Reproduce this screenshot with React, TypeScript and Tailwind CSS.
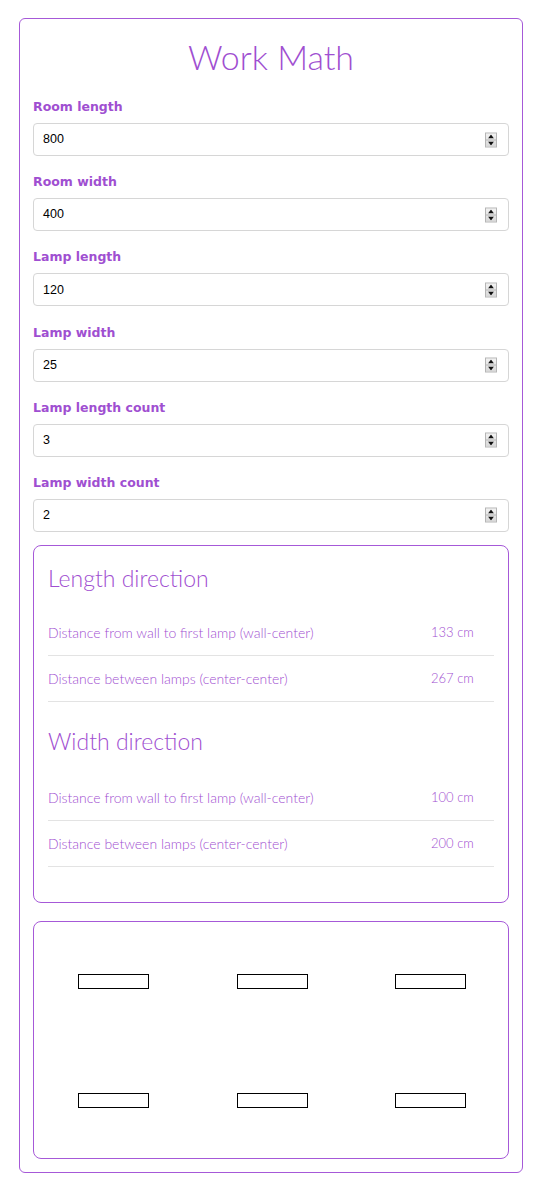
import React from "react";

const purple = "text-[#9f4fd1]";

function Spinner() {
  return (
    <div className="absolute right-[11px] top-1/2 -translate-y-1/2 flex h-[15px] w-[12px] flex-col border border-[#b5b5b5] bg-gradient-to-b from-[#f2f2f2] to-[#d8d8d8]">
      <div className="flex flex-1 items-center justify-center border-b border-[#b5b5b5]">
        <svg width="6" height="4" viewBox="0 0 6 4"><path d="M3 0 L6 4 L0 4 Z" fill="#111" /></svg>
      </div>
      <div className="flex flex-1 items-center justify-center">
        <svg width="6" height="4" viewBox="0 0 6 4"><path d="M0 0 L6 0 L3 4 Z" fill="#111" /></svg>
      </div>
    </div>
  );
}

function Field({ label, value }: { label: string; value: string }) {
  return (
    <div className="flex flex-col">
      <div className={`h-[16px] text-[12.5px] font-bold leading-[16px] ${purple} [font-family:'DejaVu_Sans',sans-serif]`}>
        {label}
      </div>
      <div className="relative mt-[8px] h-[33px] rounded-[4px] border border-[#d6d6d6] bg-white">
        <div className="flex h-full items-center pl-[9px] text-[12.5px] text-black [font-family:'Liberation_Sans',Arial,sans-serif]">
          {value}
        </div>
        <Spinner />
      </div>
    </div>
  );
}

function Row({ label, value }: { label: string; value: string }) {
  return (
    <div className="flex h-[46px] items-center border-b border-[#e3e3e3]">
      <div className="w-[370px] text-[14px]">{label}</div>
      <div className="pl-[13px] pt-[1px] text-[13px]">{value}</div>
    </div>
  );
}

function Lamp() {
  return <div className="h-[15px] w-[71px] border border-black bg-white" />;
}

function LampRow() {
  return (
    <div className="flex justify-between pl-[44px] pr-[42px]">
      <Lamp />
      <Lamp />
      <Lamp />
    </div>
  );
}

export default function App() {
  return (
    <div className="min-h-screen bg-white pb-[13px] pt-[18px]">
      <div className="ml-[19px] w-[504px] rounded-[6px] border border-[#a659d8] px-[13px] pb-[13px] pt-[14px]">
        <h1 className={`h-[48px] text-center text-[34px] font-light leading-[48px] ${purple} [font-family:Lato,sans-serif]`}>
          Work Math
        </h1>
        <div className="mt-[18px] flex flex-col gap-[18.2px]">
          <Field label="Room length" value="800" />
          <Field label="Room width" value="400" />
          <Field label="Lamp length" value="120" />
          <Field label="Lamp width" value="25" />
          <Field label="Lamp length count" value="3" />
          <Field label="Lamp width count" value="2" />
        </div>

        <div className={`mt-[13px] rounded-[8px] border border-[#a659d8] px-[14px] pb-[35px] pt-[14px] ${purple} [font-family:Lato,sans-serif]`}>
          <h2 className="h-[36px] text-[23px] font-light leading-[36px]">Length direction</h2>
          <div className="mt-[14px] font-light">
            <Row label="Distance from wall to first lamp (wall-center)" value="133 cm" />
            <Row label="Distance between lamps (center-center)" value="267 cm" />
          </div>
          <h2 className="mt-[21px] h-[36px] text-[23px] font-light leading-[36px]">Width direction</h2>
          <div className="mt-[16px] font-light">
            <Row label="Distance from wall to first lamp (wall-center)" value="100 cm" />
            <Row label="Distance between lamps (center-center)" value="200 cm" />
          </div>
        </div>

        <div className="mt-[18px] flex flex-col gap-[104px] rounded-[8px] border border-[#a659d8] pb-[50px] pt-[52px]">
          <LampRow />
          <LampRow />
        </div>
      </div>
    </div>
  );
}
